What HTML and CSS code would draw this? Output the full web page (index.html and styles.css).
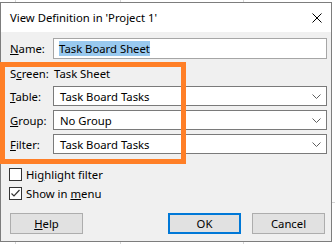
FILE: index.html
```
<!DOCTYPE html>
<html lang="en">
<head>
    <meta charset="UTF-8">
    <title>View Definition</title>
    <link rel="stylesheet" href="styles.css">
</head>
<body>
    <div class="page">
        <div class="dialog">
            <div class="titlebar">
                <span class="title">View Definition in 'Project 1'</span>
                <svg class="close" width="10" height="10" viewBox="0 0 10 10">
                    <path d="M0.5 0.5 L9.5 9.5 M9.5 0.5 L0.5 9.5" stroke="#000" stroke-width="1" fill="none"/>
                </svg>
            </div>

            <div class="content">
                <div class="row">
                    <span class="label"><u>N</u>ame:</span>
                    <div class="textbox"><span class="selected">Task Board Sheet</span></div>
                </div>

                <div class="row screen-row">
                    <span class="label">S<u>c</u>reen:</span>
                    <span class="value">Task Sheet</span>
                </div>

                <div class="row combo-row first">
                    <span class="label"><u>T</u>able:</span>
                    <div class="combo">
                        <span>Task Board Tasks</span>
                        <svg class="chevron" width="9" height="5" viewBox="0 0 9 5"><path d="M0.5 0.5 L4.5 4.5 L8.5 0.5" stroke="#5f5f5f" fill="none"/></svg>
                    </div>
                </div>

                <div class="row combo-row">
                    <span class="label"><u>G</u>roup:</span>
                    <div class="combo">
                        <span>No Group</span>
                        <svg class="chevron" width="9" height="5" viewBox="0 0 9 5"><path d="M0.5 0.5 L4.5 4.5 L8.5 0.5" stroke="#5f5f5f" fill="none"/></svg>
                    </div>
                </div>

                <div class="row combo-row">
                    <span class="label"><u>F</u>ilter:</span>
                    <div class="combo">
                        <span>Task Board Tasks</span>
                        <svg class="chevron" width="9" height="5" viewBox="0 0 9 5"><path d="M0.5 0.5 L4.5 4.5 L8.5 0.5" stroke="#5f5f5f" fill="none"/></svg>
                    </div>
                </div>

                <div class="check first-check">
                    <span class="box"></span>
                    <span>Hi<u>g</u>hlight filter</span>
                </div>

                <div class="check">
                    <span class="box">
                        <svg width="11" height="11" viewBox="0 0 11 11"><path d="M1.5 5.5 L4 8 L9.5 2" stroke="#333" stroke-width="1.2" fill="none"/></svg>
                    </span>
                    <span>Show in <u>m</u>enu</span>
                </div>

                <div class="buttons">
                    <div class="btn"><u>H</u>elp</div>
                    <div class="spacer"></div>
                    <div class="btn default">OK</div>
                    <div class="btn">Cancel</div>
                </div>
            </div>

            <div class="callout"></div>
        </div>
    </div>
</body>
</html>
```

FILE: styles.css
```
html, body { margin: 0; }
body {
    width: 335px;
    height: 244px;
    overflow: hidden;
    font-family: "Noto Sans", "Segoe UI", sans-serif;
    font-size: 11.3px;
    color: #000;
    background-color: #fff;
    background-image:
        linear-gradient(#d6d6d6, #d6d6d6),
        linear-gradient(#d6d6d6, #d6d6d6),
        linear-gradient(#d6d6d6, #d6d6d6),
        linear-gradient(#d6d6d6, #d6d6d6);
    background-repeat: no-repeat;
    background-size: 1px 244px, 1px 244px, 1px 244px, 335px 1px;
    background-position: 15px 0, 120px 0, 243px 0, 0 202px;
}
.page { padding-top: 2px; }

.dialog {
    position: relative;
    width: 330px;
    height: 238px;
    border: 1px solid #7d7d7d;
    background: #f0f0f0;
}

.titlebar {
    height: 29px;
    background: #fff;
    display: flex;
    align-items: center;
    padding: 0 9px;
}
.title { flex: 1; }
.close { display: block; }

.content { padding: 6px 4px 0 9px; }

.row { display: flex; align-items: center; }
.label { width: 43px; flex: none; }
.textbox {
    flex: 1;
    height: 21px;
    box-sizing: border-box;
    border: 1px solid #a6a6a6;
    background: #fff;
    padding-left: 5px;
    display: flex;
    align-items: center;
}
.selected { background: #99c9ef; line-height: 15px; }

.screen-row { height: 22px; margin-top: 3px; }
.screen-row .label { width: 44px; }

.combo-row { margin-top: 4px; }
.combo-row.first { margin-top: 2px; }
.combo {
    flex: 1;
    height: 20px;
    box-sizing: border-box;
    border: 1px solid #7a7a7a;
    background: #fff;
    padding: 0 5px 0 6px;
    display: flex;
    align-items: center;
    justify-content: space-between;
}
.chevron { display: block; }

.check {
    display: flex;
    align-items: center;
    gap: 4px;
    height: 13px;
    margin-left: -1px;
    margin-top: 6px;
}
.check.first-check { margin-top: 14px; }
.box {
    width: 13px;
    height: 13px;
    box-sizing: border-box;
    border: 1px solid #333;
    background: #fff;
    display: flex;
    align-items: center;
    justify-content: center;
}

.buttons {
    display: flex;
    gap: 11px;
    margin-top: 13px;
    margin-right: 2px;
}
.spacer { flex: 1; }
.btn {
    width: 73px;
    height: 21px;
    box-sizing: border-box;
    border: 1px solid #adadad;
    background: #e1e1e1;
    display: flex;
    align-items: center;
    justify-content: center;
}
.btn.default { border: 2px solid #0078d7; }

.callout {
    position: absolute;
    left: -1px;
    top: 59px;
    width: 186px;
    height: 102px;
    box-sizing: border-box;
    border: 5px solid #ff7f27;
}
```
